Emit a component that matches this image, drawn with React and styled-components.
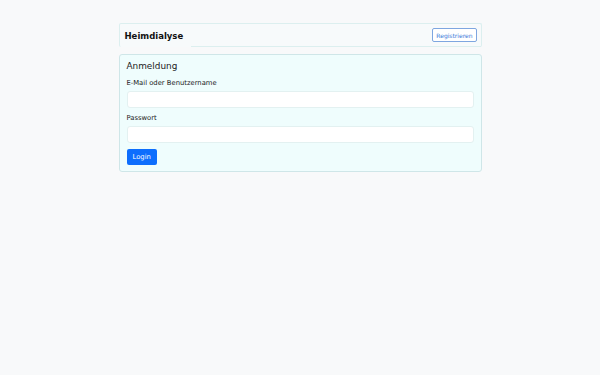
import React from 'react';
import styled, { createGlobalStyle } from 'styled-components';

const Global = createGlobalStyle`
  html, body {
    margin: 0;
    padding: 0;
    background: #f8f9fa;
    font-family: "DejaVu Sans", "Liberation Sans", sans-serif;
    color: #212529;
  }
`;

const Page = styled.div`
  width: 363px;
  margin: 0 auto;
  padding-top: 23px;
  display: flex;
  flex-direction: column;
  gap: 7px;
`;

const Header = styled.header`
  display: flex;
  align-items: stretch;
  height: 24px;
  border: 1px solid #dcefef;
  border-bottom: none;
  border-radius: 2px;
  background: #f7fafb;
  box-sizing: border-box;
`;

const Brand = styled.div`
  display: flex;
  align-items: center;
  padding-left: 5px;
  padding-right: 8px;
  font-size: 8.5px;
  font-weight: bold;
  color: #111;
`;

const NavRest = styled.div`
  flex: 1;
  display: flex;
  align-items: center;
  justify-content: flex-end;
  padding-right: 4px;
  border-bottom: 1px solid #dcefef;
`;

const OutlineButton = styled.button`
  font-family: inherit;
  font-size: 6px;
  color: #3d7bd9;
  background: #fff;
  border: 1px solid #7ea6e0;
  border-radius: 2px;
  padding: 0 3px;
  height: 14px;
  cursor: pointer;
`;

const Card = styled.section`
  border: 1px solid #cfe6e8;
  border-radius: 3px;
  background: #effdfd;
  padding: 6px 7px 6px;
  display: flex;
  flex-direction: column;
`;

const Title = styled.h2`
  margin: 0 0 8px;
  font-size: 8.9px;
  font-weight: normal;
  color: #222;
`;

const Label = styled.label`
  font-size: 6.8px;
  color: #222;
  margin-bottom: 4px;
`;

const Input = styled.input`
  box-sizing: border-box;
  height: 17px;
  width: 100%;
  border: 1px solid #e3f1f1;
  border-radius: 3px;
  background: #fff;
  margin-bottom: 6px;
  outline: none;
`;

const Primary = styled.button`
  align-self: flex-start;
  font-family: inherit;
  font-size: 6.8px;
  color: #fff;
  background: #0d6efd;
  border: none;
  border-radius: 2px;
  height: 16px;
  padding: 0 6px;
  cursor: pointer;
`;

export default function App() {
  return (
    <>
      <Global />
      <Page>
        <Header>
          <Brand>Heimdialyse</Brand>
          <NavRest>
            <OutlineButton>Registrieren</OutlineButton>
          </NavRest>
        </Header>
        <Card>
          <Title>Anmeldung</Title>
          <Label>E-Mail oder Benutzername</Label>
          <Input type="text" />
          <Label>Passwort</Label>
          <Input type="password" />
          <Primary>Login</Primary>
        </Card>
      </Page>
    </>
  );
}
